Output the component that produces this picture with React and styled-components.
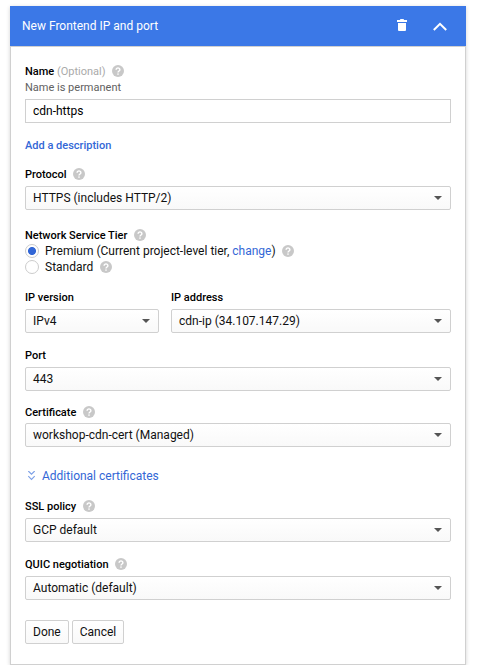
import React from 'react';
import styled, { createGlobalStyle } from 'styled-components';

const GlobalStyle = createGlobalStyle`
  *, *::before, *::after { box-sizing: border-box; }
  body { margin: 0; background: #fff; }
`;

const Page = styled.main`
  padding: 6px 12px 0 10px;
  font: 400 12px/16px Roboto, sans-serif;
  color: #212121;
`;

const Card = styled.section`
  width: 456px;
  height: 659px;
  box-shadow: 0 1px 4px rgba(0, 0, 0, 0.18);
`;

const Header = styled.header`
  display: flex;
  align-items: center;
  height: 40px;
  padding: 0 18px 0 12px;
  background: #3b78e7;
  color: #fff;
`;

const Title = styled.h1`
  flex: 1;
  margin: 0;
  font: inherit;
`;

const IconButton = styled.button`
  display: flex;
  padding: 0 0 ${(p) => p.$lift || 0}px;
  border: 0;
  background: none;
  color: #fff;
  margin-left: ${(p) => p.$gap || 0}px;
`;

const Body = styled.div`
  display: flex;
  flex-direction: column;
  height: 619px;
  padding: 16px 14px 0;
  border: 1px solid #d0d0d0;
  background: #fff;
`;

const Field = styled.div`
  display: flex;
  flex-direction: column;
  width: ${(p) => (p.$width ? `${p.$width}px` : 'auto')};
  margin-top: ${(p) => p.$top || 0}px;
`;

const FieldRow = styled.div`
  display: flex;
  gap: 12px;
  margin-top: 14px;
`;

const Label = styled.div`
  display: flex;
  align-items: flex-start;
  height: 16px;
  margin-bottom: ${(p) => p.$bottom ?? 4}px;
  font-size: 11px;
  line-height: 18px;
  font-weight: 500;
  color: #000;
  white-space: pre;
`;

const Optional = styled.span`
  font-weight: 400;
  color: #aaa;
`;

const Hint = styled.div`
  height: 16px;
  margin-bottom: 4px;
  font-size: 11px;
  line-height: 18px;
  color: #616161;
`;

const TextInput = styled.input`
  width: 100%;
  height: 24px;
  padding: 0 7px;
  border: 1px solid #d0d0d0;
  border-radius: 0;
  outline: 0;
  background: #fff;
  color: #000;
  font: inherit;
`;

const SelectBox = styled.button`
  display: flex;
  align-items: center;
  justify-content: space-between;
  width: 100%;
  height: 24px;
  padding: 0 8px 0 7px;
  border: 1px solid #d0d0d0;
  border-radius: 2px;
  background: linear-gradient(#fff, #f9f9f9);
  color: #111;
  font: inherit;
`;

const HelpSvg = styled.svg`
  flex: none;
  align-self: center;
  width: 12px;
  height: 12px;
  margin-left: 6.4px;
`;

const Link = styled.a`
  color: #3367d6;
  text-decoration: none;
`;

const AddLink = styled(Link)`
  height: 16px;
  margin-top: 14px;
  font-size: 11px;
  line-height: 18px;
  font-weight: 500;
`;

const Option = styled.label`
  display: flex;
  align-items: center;
  height: 16px;
  color: #111;
  white-space: pre;
`;

const Radio = styled.input`
  appearance: none;
  flex: none;
  width: 14px;
  height: 14px;
  margin: 0 6px 0 0;
  border: 1px solid #ccc;
  border-radius: 50%;
  background: #fff;
  &:checked {
    background: radial-gradient(circle, #3367d6 3.6px, #fff 4.4px);
  }
`;

const Expander = styled(Link)`
  display: flex;
  align-items: center;
  height: 16px;
  margin-top: 21px;
  padding-left: 2px;
  gap: 6px;
`;

const Actions = styled.div`
  display: flex;
  gap: 3px;
  margin-top: 20px;
`;

const Button = styled.button`
  height: 24px;
  padding: 0 7px;
  border: 1px solid #d0d0d0;
  border-radius: 2px;
  background: linear-gradient(#fff, #f9f9f9);
  color: #111;
  font: inherit;
`;

const Help = () => (
  <HelpSvg viewBox="0 0 12 12">
    <circle cx="6" cy="6" r="6" fill="#c8c8c8" />
    <path d="M4.1 4.8a1.9 1.9 0 1 1 3.8 0c0 1.2-1.9 1.3-1.9 2.7" fill="none" stroke="#fff" strokeWidth="1.4" />
    <rect x="5.3" y="8.4" width="1.4" height="1.4" fill="#fff" />
  </HelpSvg>
);

const Select = ({ value }) => (
  <SelectBox type="button">
    <span>{value}</span>
    <svg width="8" height="4" viewBox="0 0 8 4">
      <path d="M0 0h8L4 4z" fill="#555" />
    </svg>
  </SelectBox>
);

const SelectField = ({ label, value, help, top, width, labelGap }) => (
  <Field $top={top} $width={width}>
    <Label $bottom={labelGap}>
      {label}
      {help && <Help />}
    </Label>
    <Select value={value} />
  </Field>
);

export default function App() {
  return (
    <Page>
      <GlobalStyle />
      <Card>
        <Header>
          <Title>New Frontend IP and port</Title>
          <IconButton aria-label="Delete" $lift={2}>
            <svg width="10" height="12" viewBox="0 0 10 12" fill="currentColor">
              <path d="M0 1h2.8l.7-1h3l.7 1H10v2H0zM1 4h8v7a1 1 0 0 1-1 1H2a1 1 0 0 1-1-1z" />
            </svg>
          </IconButton>
          <IconButton aria-label="Collapse" $gap={25}>
            <svg width="16" height="12" viewBox="0 0 16 12" fill="none" stroke="currentColor" strokeWidth="2">
              <path d="M1.8 10 8 3.8l6.2 6.2" />
            </svg>
          </IconButton>
        </Header>
        <Body>
          <Field>
            <Label $bottom={0}>
              Name <Optional>(Optional)</Optional>
              <Help />
            </Label>
            <Hint>Name is permanent</Hint>
            <TextInput defaultValue="cdn-https" />
          </Field>
          <AddLink>Add a description</AddLink>
          <SelectField label="Protocol" value="HTTPS (includes HTTP/2)" help top={13} />
          <Field $top={17}>
            <Label $bottom={0}>
              Network Service Tier
              <Help />
            </Label>
            <Option>
              <Radio type="radio" name="tier" defaultChecked />
              <span>Premium (Current project-level tier, <Link>change</Link>)</span>
              <Help />
            </Option>
            <Option>
              <Radio type="radio" name="tier" />
              Standard
              <Help />
            </Option>
          </Field>
          <FieldRow>
            <SelectField label="IP version" value="IPv4" width={134} />
            <SelectField label="IP address" value="cdn-ip (34.107.147.29)" width={280} />
          </FieldRow>
          <SelectField label="Port" value="443" top={14} />
          <SelectField label="Certificate" value="workshop-cdn-cert (Managed)" help top={13} labelGap={3} />
          <Expander>
            <svg width="9" height="10" viewBox="0 0 9 10" fill="none" stroke="#7b9fe6" strokeWidth="1.1">
              <path d="M1.3 0 4.5 3.2 7.7 0M1.3 5.2l3.2 3.2 3.2-3.2" />
            </svg>
            Additional certificates
          </Expander>
          <SelectField label="SSL policy" value="GCP default" help top={14} />
          <SelectField label="QUIC negotiation" value="Automatic (default)" help top={14} />
          <Actions>
            <Button>Done</Button>
            <Button>Cancel</Button>
          </Actions>
        </Body>
      </Card>
    </Page>
  );
}
